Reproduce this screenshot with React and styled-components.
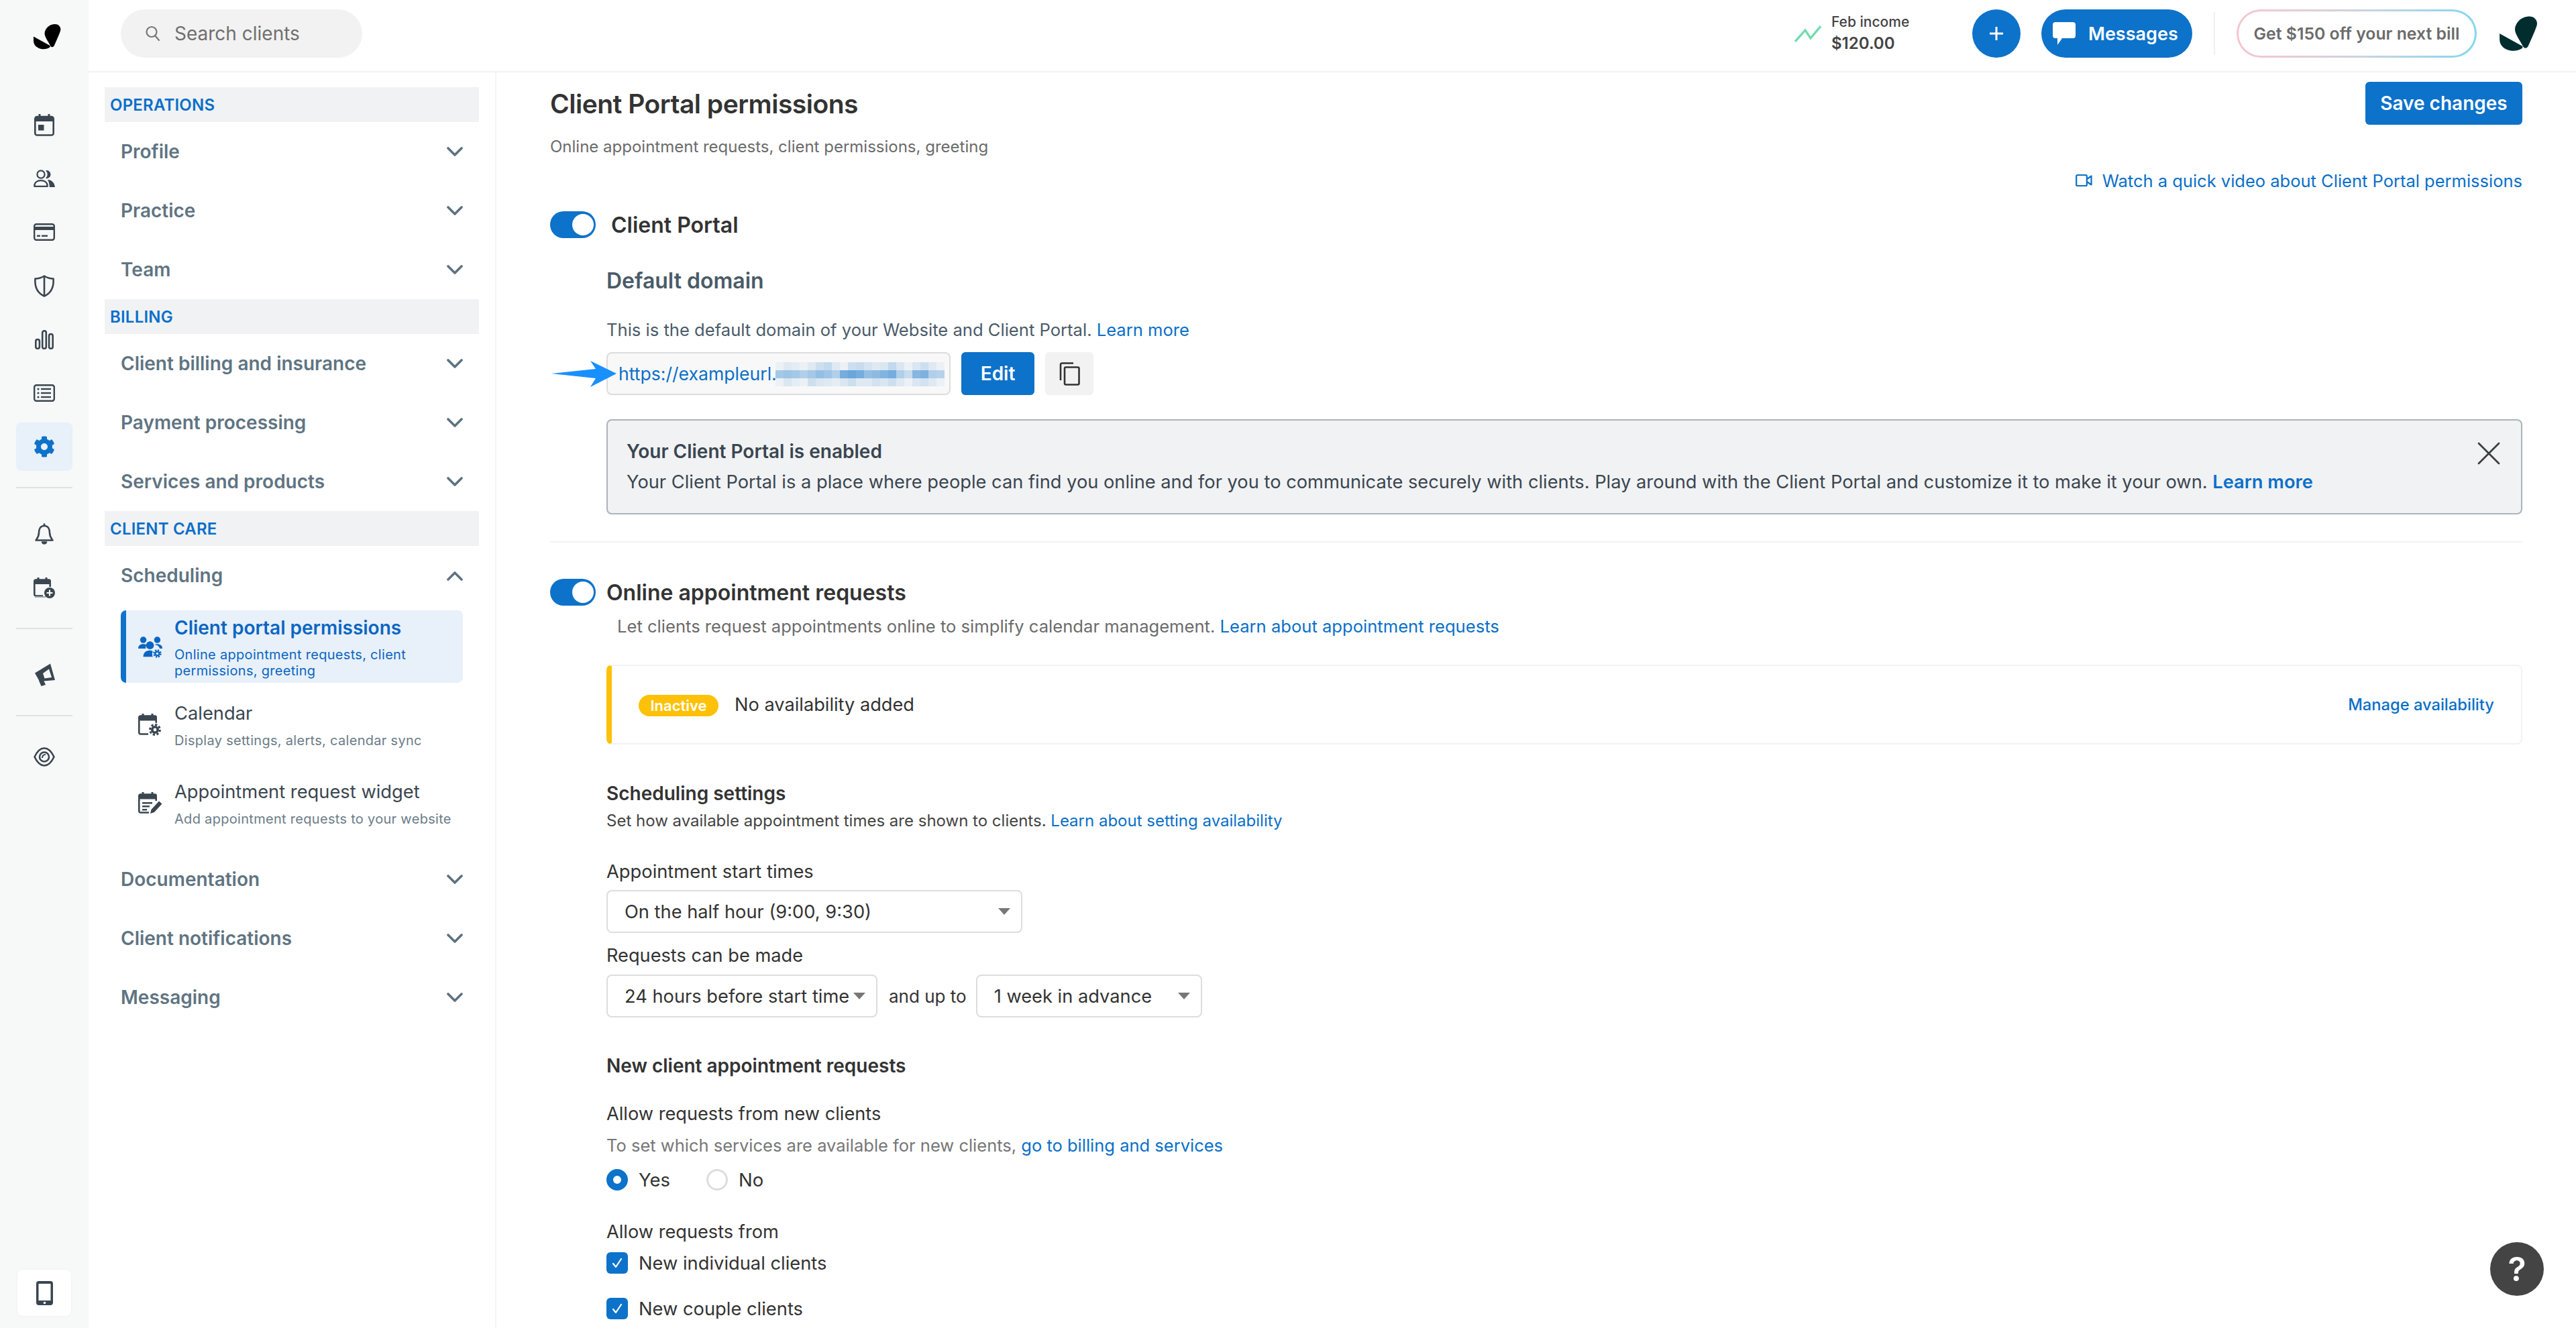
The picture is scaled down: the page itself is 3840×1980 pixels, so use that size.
import React from 'react';
import styled, { createGlobalStyle } from 'styled-components';
import { FaCog } from 'react-icons/fa';

const Global = createGlobalStyle`
  html, body { margin: 0; padding: 0; background: #fff; height: 1980px; overflow: hidden; }
  * { box-sizing: border-box; }
  body { font-family: Inter, "Noto Sans", sans-serif; color: #333; }
  a { color: #0a6fc9; text-decoration: none; }
`;

const BLUE = '#0d72ca';
const DARK = '#3a4650';
const LINK = '#0a6fc9';

const Page = styled.div`
  display: flex; width: 3840px; height: 1980px; overflow: hidden; position: relative;
`;
const Rail = styled.nav`
  width: 132px; flex: none; background: #f7f8f8; display: flex; flex-direction: column; align-items: center;
  height: 1980px; padding-top: 35px; padding-bottom: 18px;
`;
const RailLogo = styled.div`
  height: 40px; margin-bottom: 71px; margin-left: 8px; display: flex;
`;
const RailItem = styled.div`
  width: 84px; height: 72px; margin: 4px 0; border-radius: 8px; display: flex; align-items: center; justify-content: center;
  background: ${p => (p.$active ? '#e8f0fa' : 'transparent')}; color: ${p => (p.$active ? BLUE : DARK)};
`;
const RailDivider = styled.div`
  width: 84px; height: 2px; background: #dfe1e2; margin: 20px 0 ${p => p.$tight ? '20px' : '28px'};
`;
const MobileBtn = styled.div`
  margin-top: auto; width: 80px; height: 69px; background: #fff; border-radius: 8px; box-shadow: 0 0 3px rgba(0,0,0,.06);
  display: flex; align-items: center; justify-content: center;
`;
const Right = styled.div`
  flex: 1; display: flex; flex-direction: column; min-width: 0;
`;
const Header = styled.header`
  height: 108px; flex: none; border-bottom: 2px solid #f2f2f2; display: flex; align-items: flex-start; padding-top: 14px; padding-left: 48px;
`;
const Search = styled.div`
  width: 360px; height: 72px; border-radius: 36px; background: #f2f2f2; display: flex; align-items: center; padding-left: 37px; gap: 21px;
  font-size: 28px; color: #6f6f6f;
`;
const Spacer = styled.div` flex: 1; `;
const Income = styled.div`
  width: 265px; display: flex; align-items: center; gap: 15px; height: 72px;
`;
const IncomeText = styled.div`
  display: flex; flex-direction: column; color: #444;
`;
const IncomeLabel = styled.span` font-size: 21px; line-height: 30px; font-weight: 500; `;
const IncomeValue = styled.span` font-size: 24px; line-height: 34px; font-weight: 600; `;
const PlusBtn = styled.div`
  width: 72px; height: 72px; border-radius: 50%; background: ${BLUE}; display: flex; align-items: center; justify-content: center; margin-right: 31px;
`;
const MessagesBtn = styled.div`
  width: 225px; height: 72px; border-radius: 36px; background: ${BLUE}; color: #fff; display: flex; align-items: center; padding-left: 17px; gap: 19px;
  font-size: 27px; font-weight: 600;
`;
const HeaderDivider = styled.div`
  width: 2px; height: 64px; background: #f0f0f0; margin: 4px 32px 0 32px;
`;
const Promo = styled.div`
  width: 358px; height: 72px; border-radius: 36px; border: 3px solid transparent;
  background: linear-gradient(#fff, #fff) padding-box, linear-gradient(90deg, #f6c6cf, #cfd3dc 50%, #85d6f0) border-box;
  display: flex; align-items: center; justify-content: center; font-size: 24.8px; font-weight: 600; color: #6b6b6b;
`;
const HeaderLogo = styled.div`
  margin-left: 34px; margin-right: 57px; margin-top: 9px; display: flex;
`;
const Body = styled.div`
  flex: 1; display: flex; min-height: 0;
`;
const Sidebar = styled.aside`
  width: 608px; flex: none; border-right: 2px solid #f5f5f5; padding: 22px 24px 0;
`;
const SectionBar = styled.div`
  height: 52px; background: #f1f2f4; padding-left: 8px; display: flex; align-items: center;
  color: ${LINK}; font-size: 24px; font-weight: 600; letter-spacing: 0.2px;
`;
const NavRow = styled.div`
  height: 88px; display: flex; align-items: center; justify-content: space-between; padding: 0 24px;
  font-size: 28px; font-weight: 600; color: #5f7482;
`;
const SubList = styled.div`
  padding: 0 24px; margin-top: 8px; margin-bottom: 28px;
`;
const SubItem = styled.div`
  width: 510px; display: flex; align-items: center; gap: 18px; padding: 8px 10px 6px 26px; margin-top: ${p => p.$top || 0}px;
  border-radius: 8px; position: relative; overflow: hidden;
  background: ${p => (p.$active ? '#e8f0fa' : 'transparent')};
  border-left: ${p => (p.$active ? `8px solid ${BLUE}` : 'none')};
  padding-left: ${p => (p.$active ? 18 : 26)}px;
`;
const SubIcon = styled.div` width: 36px; height: 40px; flex: none; display: flex; align-items: center; `;
const SubText = styled.div` flex: 1; min-width: 0; `;
const SubTitle = styled.div`
  font-size: ${p => (p.$active ? 28 : 27.3)}px; line-height: 36px; font-weight: ${p => (p.$active ? 600 : 400)}; color: ${p => (p.$active ? '#0a66c2' : '#3a4650')};
`;
const SubDesc = styled.div`
  font-size: 20px; line-height: 24px; margin-top: 10px; letter-spacing: 0.3px; color: ${p => (p.$active ? '#0a66c2' : '#6b7c88')};
`;
const Main = styled.main`
  flex: 1; padding: 14px 80px 0; min-width: 0;
`;
const HeadRow = styled.div` display: flex; justify-content: space-between; align-items: center; height: 64px; `;
const Title = styled.h1` margin: 0; font-size: 39px; font-weight: 600; color: #333; letter-spacing: -0.5px; `;
const SaveBtn = styled.div`
  width: 234px; height: 64px; background: ${BLUE}; color: #fff; border-radius: 6px; display: flex; align-items: center; justify-content: center;
  font-size: 28px; font-weight: 600;
`;
const Line = styled.div`
  margin-top: ${p => p.$mt || 0}px; padding-left: ${p => p.$pl || 0}px; font-size: ${p => p.$size || 25.6}px; line-height: ${p => p.$lh || 36}px;
  font-weight: ${p => p.$w || 400}; color: ${p => p.$color || '#333'};
`;
const WatchLink = styled.a`
  margin-top: 14px; height: 36px; display: flex; justify-content: flex-end; align-items: center; gap: 15px; font-size: 25.5px; color: ${LINK};
`;
const ToggleRow = styled.div`
  margin-top: ${p => p.$mt}px; display: flex; align-items: center; height: 40px; gap: ${p => p.$gap}px;
  font-size: 32px; font-weight: 600; color: #333;
`;
const Toggle = styled.div`
  width: 68px; height: 40px; border-radius: 20px; background: ${BLUE}; position: relative; flex: none;
  &::after { content: ''; position: absolute; right: 3px; top: 4px; width: 32px; height: 32px; border-radius: 50%; background: #fff; }
`;
const DomainRow = styled.div`
  margin-top: 15px; margin-left: 84px; display: flex; gap: 16px; height: 64px; position: relative;
`;
const ArrowMark = styled.svg`
  position: absolute; left: -84px; top: 10px; z-index: 2;
`;
const DomainInput = styled.div`
  width: 513px; height: 64px; background: #f8f8f8; border: 2px solid #ddd; border-radius: 8px; display: flex; align-items: center; padding-left: 16px;
  font-size: 26.6px; color: ${LINK}; position: relative; overflow: hidden;
`;
const Blur = styled.svg` position: absolute; left: 250px; top: 13px; `;
const EditBtn = styled.div`
  width: 109px; height: 64px; background: ${BLUE}; border-radius: 6px; color: #fff; display: flex; align-items: center; justify-content: center;
  font-size: 28px; font-weight: 600;
`;
const CopyBtn = styled.div`
  width: 72px; height: 64px; background: #f2f2f2; border-radius: 6px; display: flex; align-items: center; justify-content: center;
`;
const Alert = styled.div`
  margin-top: 36px; margin-left: 84px; height: 142px; background: #f1f2f4; border: 2px solid #a9b5bc; border-radius: 8px; padding: 28px 28px 0 28px;
  position: relative; color: #3a4650;
`;
const AlertTitle = styled.div` font-size: 28px; line-height: 36px; font-weight: 600; `;
const AlertText = styled.div`
  font-size: 27.25px; line-height: 36px; margin-top: 10px;
  a { font-weight: 600; }
`;
const Close = styled.svg` position: absolute; right: 31px; top: 32px; `;
const Divider = styled.div` height: 2px; background: #f2f2f2; margin-top: 40px; `;
const Card = styled.div`
  margin-top: 39px; margin-left: 84px; height: 119px; border: 2px solid #f2f2f2; border-left: 8px solid #ffc107; border-radius: 8px;
  display: flex; align-items: center; padding: 0 40px 0 40px; gap: 24px;
`;
const Badge = styled.span`
  width: 119px; height: 32px; background: #ffc107; color: #fff; border-radius: 16px; display: flex; align-items: center; justify-content: center;
  font-size: 22px; font-weight: 600; margin-top: 3px;
`;
const CardText = styled.span` font-size: 27.2px; color: #333; flex: 1; `;
const CardLink = styled.a` font-size: 23.7px; font-weight: 500; `;
const Indent = styled.div` margin-left: 84px; `;
const Select = styled.div`
  width: ${p => p.$width}px; height: 64px; border: 2px solid #ddd; border-radius: 8px; background: #fff; display: flex; align-items: center;
  justify-content: space-between; padding: 0 16px 0 25px; font-size: 27.25px; color: #333; flex: none; white-space: nowrap;
  margin-top: ${p => p.$mt || 0}px;
  &::after { content: ''; width: 0; height: 0; border-left: 9px solid transparent; border-right: 9px solid transparent; border-top: 10px solid #777; }
`;
const SelectRow = styled.div`
  margin-top: 10px; display: flex; align-items: center; height: 64px;
`;
const AndUp = styled.span` font-size: 26px; color: #333; margin: 0 14px 0 17px; `;
const RadioRow = styled.div`
  margin-top: 15px; display: flex; align-items: center; height: 36px; font-size: 27.5px;
`;
const Radio = styled.span`
  width: 32px; height: 32px; border-radius: 50%; flex: none; background: #fff; margin-right: 16px;
  border: ${p => (p.$on ? `10px solid ${BLUE}` : '3px solid #ddd')};
`;
const RadioLabel = styled.span` width: 101px; color: #333; `;
const CheckRow = styled.div`
  margin-top: ${p => p.$mt}px; display: flex; align-items: center; gap: 16px; height: 36px; font-size: 27.3px; color: #333;
`;
const CheckBox = styled.span`
  width: 32px; height: 32px; background: ${BLUE}; border-radius: 6px; display: flex; align-items: center; justify-content: center; flex: none;
`;
const Help = styled.div`
  position: absolute; left: 3712px; top: 1852px; width: 80px; height: 80px; border-radius: 50%; background: #444; color: #fff;
  display: flex; align-items: center; justify-content: center; font-size: 50px; font-weight: 600;
`;

const Logo = ({ fill, w = 41, h = 39 }) => (
  <svg width={w} height={h} viewBox="20 14 41 39" fill={fill}>
    <path d="M36.5 29C37 21 44 15 52 15C58 15 61.5 20 60 25C58 31 54 40 51 46.5C49.5 50 46.5 50 45 47C42 41 36.5 34 36.5 29Z" />
    <path d="M20 33.5L44.5 47C45 48 45 49 43.5 50C40 52 36 52.5 32 52C25 51 20 46 20 40Z" />
  </svg>
);
const Chevron = ({ up }) => (
  <svg width="24" height="15" viewBox="0 0 24 15" fill="none" stroke="#5d7280" strokeWidth="3.6" strokeLinecap="round" strokeLinejoin="round">
    <path d={up ? 'M2 13L12 3L22 13' : 'M2 2L12 12L22 2'} />
  </svg>
);
const CalendarIcon = () => (
  <svg width="30" height="33" viewBox="0 0 30 33" fill={DARK}>
    <path d="M8 0v5M22 0v5" stroke={DARK} strokeWidth="3" />
    <rect x="1.3" y="4" width="27.4" height="27.5" rx="3" fill="none" stroke={DARK} strokeWidth="2.6" />
    <rect x="1" y="4" width="28" height="7" rx="2" />
    <rect x="6" y="16" width="8.5" height="8.5" />
  </svg>
);
const PeopleIcon = () => (
  <svg width="32" height="26" viewBox="0 0 32 26" fill={DARK}>
    <circle cx="11" cy="7" r="5.6" fill="none" stroke={DARK} strokeWidth="2.2" />
    <path d="M18 1.2a6 6 0 1 1 0 11.6a7.5 7.5 0 0 0 0-11.6z" />
    <path d="M1.2 24.8c0-5.6 4-8.6 9.8-8.6s9.8 3 9.8 8.6z" fill="none" stroke={DARK} strokeWidth="2.2" strokeLinejoin="round" />
    <path d="M21 15c6 0 10 4 11 11h-8.2c0-4.5-1-8-2.8-11z" />
  </svg>
);
const CardIcon = () => (
  <svg width="32" height="26" viewBox="0 0 32 26" fill={DARK}>
    <rect x="1.2" y="1.2" width="29.6" height="23.6" rx="3" fill="none" stroke={DARK} strokeWidth="2.4" />
    <rect x="1" y="5" width="30" height="5" />
    <rect x="5" y="17.5" width="5" height="2.4" />
    <rect x="12" y="17.5" width="9" height="2.4" />
  </svg>
);
const ShieldIcon = () => (
  <svg width="30" height="33" viewBox="0 0 30 33" fill="none" stroke={DARK} strokeWidth="2.6" strokeLinejoin="round">
    <path d="M15 1.5C19 4 24 5.5 28.5 5.5C29.5 18 25 27 15 31.5C5 27 .5 18 1.5 5.5C6 5.5 11 4 15 1.5Z" />
    <path d="M15 1.5V31.5" />
  </svg>
);
const ChartIcon = () => (
  <svg width="28" height="29" viewBox="0 0 28 29" fill="none" stroke={DARK} strokeWidth="2.6">
    <rect x="1.3" y="14" width="5.6" height="13.7" rx="2.8" />
    <rect x="11.2" y="1.3" width="5.6" height="26.4" rx="2.8" />
    <rect x="21.1" y="6" width="5.6" height="21.7" rx="2.8" />
  </svg>
);
const ListIcon = () => (
  <svg width="32" height="26" viewBox="0 0 32 26" fill={DARK}>
    <rect x="1.2" y="1.2" width="29.6" height="23.6" rx="3" fill="none" stroke={DARK} strokeWidth="2.4" />
    {[7, 13, 19].map(y => (
      <g key={y}>
        <circle cx="7" cy={y} r="1.6" />
        <rect x="11" y={y - 1.2} width="15" height="2.4" />
      </g>
    ))}
  </svg>
);
const BellIcon = () => (
  <svg width="28" height="32" viewBox="0 0 28 32" fill="none" stroke={DARK} strokeWidth="2.6" strokeLinejoin="round">
    <path d="M14 4C8 4 6 9 6 14C6 20 4 22 1.5 25.5H26.5C24 22 22 20 22 14C22 9 20 4 14 4Z" />
    <path d="M14 0.5V4" />
    <path d="M11 28.5C12 31 16 31 17 28.5Z" fill={DARK} />
  </svg>
);
const CalPlusIcon = () => (
  <svg width="32" height="31" viewBox="0 0 32 31" fill={DARK}>
    <path d="M7 0v4M19 0v4" stroke={DARK} strokeWidth="3" />
    <path d="M14 27.5H3.5a2.2 2.2 0 0 1-2.2-2.2V5.5a2 2 0 0 1 2-2h19.4a2 2 0 0 1 2 2V14" fill="none" stroke={DARK} strokeWidth="2.6" />
    <rect x="1" y="3" width="24" height="7" rx="2" />
    <path d="M2 28h16v2H2z" fill="#a5abaf" />
    <circle cx="24" cy="23" r="8" />
    <path d="M24 18.5v9M19.5 23h9" stroke="#fff" strokeWidth="2.2" />
  </svg>
);
const MegaphoneIcon = () => (
  <svg width="31" height="34" viewBox="0 0 31 34" fill={DARK}>
    <path d="M1 14.5L24 0.5L31 25L8 27Z" />
    <path d="M13 15L22 8.5L26 21L15.5 22.5Z" fill="#f7f8f8" />
    <path d="M7 26l3.5 8l6.5-2l-3-6.5Z" />
  </svg>
);
const EyeIcon = () => (
  <svg width="32" height="29" viewBox="0 0 32 29" fill="none" stroke={DARK} strokeWidth="2.6">
    <path d="M1.5 14.5C6 5 11 1.5 16 1.5S26 5 30.5 14.5C26 24 21 27.5 16 27.5S6 24 1.5 14.5Z" />
    <circle cx="16" cy="14.5" r="7" />
    <path d="M13 16c0-3 2-5 5-5" strokeWidth="2" />
  </svg>
);
const PhoneIcon = () => (
  <svg width="25" height="36" viewBox="0 0 25 36">
    <rect width="25" height="36" rx="4" fill={DARK} />
    <rect x="3.5" y="4" width="18" height="25" fill="#fff" />
    <circle cx="12.5" cy="32.5" r="1.8" fill="#fff" />
  </svg>
);
const TeamIcon = () => (
  <svg width="38" height="36" viewBox="0 0 38 36" fill="#0a66c2">
    <circle cx="8" cy="6.5" r="5" />
    <circle cx="30" cy="6.5" r="5" />
    <path d="M0 20c0-5 4-7 8-7c2 0 4 .5 5 1.5c-1 1.5-1.5 3.5-1 5.5z" />
    <path d="M26 14c2-1.5 8-2 11 2c.7 1 1 2.5 1 4h-4a9 9 0 0 0-8-6z" />
    <circle cx="18.5" cy="15" r="6.2" />
    <path d="M8 33c0-6 4-10 10-10c2.5 0 4.5 .6 6 2c-2 2-2.5 5-1 8z" />
    <circle cx="30" cy="28" r="8" fill="#e8f0fa" />
    <circle cx="30" cy="28" r="3.2" fill="none" stroke="#0a66c2" strokeWidth="2.6" />
    <circle cx="30" cy="28" r="5.4" fill="none" stroke="#0a66c2" strokeWidth="2.4" strokeDasharray="2.4 1.84" />
  </svg>
);
const CalGearIcon = () => (
  <svg width="36" height="34" viewBox="0 0 36 34" fill={DARK}>
    <path d="M7 0v4M21 0v4" stroke={DARK} strokeWidth="3" />
    <path d="M15 30.5H3.5a2.2 2.2 0 0 1-2.2-2.2V5.5a2 2 0 0 1 2-2h21.4a2 2 0 0 1 2 2V14" fill="none" stroke={DARK} strokeWidth="2.6" />
    <rect x="1" y="3" width="26" height="7.5" rx="2" />
    <circle cx="25" cy="24" r="10.5" fill="#fff" />
    <circle cx="25" cy="24" r="4.2" fill="none" stroke={DARK} strokeWidth="3.6" />
    <circle cx="25" cy="24" r="7.4" fill="none" stroke={DARK} strokeWidth="3" strokeDasharray="3.2 2.6" />
  </svg>
);
const CalEditIcon = () => (
  <svg width="36" height="34" viewBox="0 0 36 34" fill={DARK}>
    <path d="M7 0v4M21 0v4" stroke={DARK} strokeWidth="3" />
    <path d="M16 30.5H3.5a2.2 2.2 0 0 1-2.2-2.2V5.5a2 2 0 0 1 2-2h21.4a2 2 0 0 1 2 2V13" fill="none" stroke={DARK} strokeWidth="2.6" />
    <rect x="1" y="3" width="26" height="7.5" rx="2" />
    <path d="M6 15h15v2.6H6zM6 20h11v2.6H6zM6 25h7v2.6H6z" />
    <path d="M31 13.5l4.5 4L24 30l-6 2l1.5-6Z" />
  </svg>
);
const CopyIcon = () => (
  <svg width="31" height="35" viewBox="0 0 31 35" fill="none" stroke="#333" strokeWidth="2.6" strokeLinejoin="round">
    <path d="M2 27V3.5A2 2 0 0 1 4 1.5H21" />
    <rect x="8" y="7.5" width="21.5" height="26" rx="2" />
  </svg>
);
const VideoIcon = () => (
  <svg width="25" height="20" viewBox="0 0 25 20" fill="none" stroke={LINK} strokeWidth="2.2" strokeLinejoin="round">
    <rect x="1.2" y="2" width="15.6" height="16" rx="1.5" />
    <path d="M17 8L23.5 3.5V16.5L17 12" />
  </svg>
);
const Check = () => (
  <svg width="18" height="18" viewBox="0 0 18 18" fill="none" stroke="#fff" strokeWidth="2.2" strokeLinecap="round" strokeLinejoin="round">
    <path d="M3 10l4 5l8-12" />
  </svg>
);

const cells = [
  [.05,.1,.08,.05,.1,.18,.22,.1,.05,.18,.2,.15,.1,.12,.22,.12,.05,.12,.18,.1,.05],
  [.35,.38,.35,.3,.35,.42,.38,.3,.55,.6,.55,.42,.45,.5,.55,.3,.2,.48,.52,.3,.28],
  [.05,.12,.08,.05,.18,.12,.1,.08,.12,.18,.1,.1,.16,.12,.18,.1,.05,.12,.16,.1,.05],
];

const NAV_A = ['Profile', 'Practice', 'Team'];
const NAV_B = ['Client billing and insurance', 'Payment processing', 'Services and products'];
const NAV_C = ['Documentation', 'Client notifications', 'Messaging'];

export default function App() {
  return (
    <Page>
      <Global />
      <Rail>
        <RailLogo><Logo fill="#000" /></RailLogo>
        <RailItem><CalendarIcon /></RailItem>
        <RailItem><PeopleIcon /></RailItem>
        <RailItem><CardIcon /></RailItem>
        <RailItem><ShieldIcon /></RailItem>
        <RailItem><ChartIcon /></RailItem>
        <RailItem><ListIcon /></RailItem>
        <RailItem $active><FaCog size={32} /></RailItem>
        <RailDivider />
        <RailItem><BellIcon /></RailItem>
        <RailItem><CalPlusIcon /></RailItem>
        <RailDivider />
        <RailItem><MegaphoneIcon /></RailItem>
        <RailDivider $tight />
        <RailItem><EyeIcon /></RailItem>
        <MobileBtn><PhoneIcon /></MobileBtn>
      </Rail>
      <Right>
        <Header>
          <Search>
            <svg width="22" height="24" viewBox="0 0 22 24" fill="none" stroke="#777" strokeWidth="2.2" strokeLinecap="round">
              <circle cx="9" cy="9.5" r="7.5" />
              <path d="M14.5 15.5L20 22" />
            </svg>
            Search clients
          </Search>
          <Spacer />
          <Income>
            <svg width="40" height="26" viewBox="0 0 40 26" fill="none" stroke="#74dbb0" strokeWidth="3.4">
              <path d="M1 25L16 8L24 20L39 2" />
            </svg>
            <IncomeText>
              <IncomeLabel>Feb income</IncomeLabel>
              <IncomeValue>$120.00</IncomeValue>
            </IncomeText>
          </Income>
          <PlusBtn>
            <svg width="24" height="24" viewBox="0 0 24 24" stroke="#fff" strokeWidth="3"><path d="M12 2V22M2 12H22" /></svg>
          </PlusBtn>
          <MessagesBtn>
            <svg width="34" height="34" viewBox="0 0 34 34" fill="#fff">
              <path d="M4 0H30A4 4 0 0 1 34 4V20A4 4 0 0 1 30 24H14L7 34V24H4A4 4 0 0 1 0 20V4A4 4 0 0 1 4 0Z" />
            </svg>
            Messages
          </MessagesBtn>
          <HeaderDivider />
          <Promo>Get $150 off your next bill</Promo>
          <HeaderLogo><Logo fill="#022d2e" w={57} h={54} /></HeaderLogo>
        </Header>
        <Body>
          <Sidebar>
            <SectionBar>OPERATIONS</SectionBar>
            {NAV_A.map(n => <NavRow key={n}>{n}<Chevron /></NavRow>)}
            <SectionBar>BILLING</SectionBar>
            {NAV_B.map(n => <NavRow key={n}>{n}<Chevron /></NavRow>)}
            <SectionBar>CLIENT CARE</SectionBar>
            <NavRow>Scheduling<Chevron up /></NavRow>
            <SubList>
              <SubItem $active>
                <SubIcon><TeamIcon /></SubIcon>
                <SubText>
                  <SubTitle $active>Client portal permissions</SubTitle>
                  <SubDesc $active>Online appointment requests, client permissions, greeting</SubDesc>
                </SubText>
              </SubItem>
              <SubItem $top={20}>
                <SubIcon><CalGearIcon /></SubIcon>
                <SubText>
                  <SubTitle>Calendar</SubTitle>
                  <SubDesc>Display settings, alerts, calendar sync</SubDesc>
                </SubText>
              </SubItem>
              <SubItem $top={33}>
                <SubIcon><CalEditIcon /></SubIcon>
                <SubText>
                  <SubTitle>Appointment request widget</SubTitle>
                  <SubDesc>Add appointment requests to your website</SubDesc>
                </SubText>
              </SubItem>
            </SubList>
            {NAV_C.map(n => <NavRow key={n}>{n}<Chevron /></NavRow>)}
          </Sidebar>
          <Main>
            <HeadRow>
              <Title>Client Portal permissions</Title>
              <SaveBtn>Save changes</SaveBtn>
            </HeadRow>
            <Line $mt={15} $size={24} $color="#6b6b6b">Online appointment requests, client permissions, greeting</Line>
            <WatchLink><VideoIcon />Watch a quick video about Client Portal permissions</WatchLink>
            <ToggleRow $mt={28} $gap={23}><Toggle />Client Portal</ToggleRow>
            <Line $mt={40} $pl={84} $size={32} $lh={48} $w={600} $color="#4a5b68">Default domain</Line>
            <Line $mt={31} $pl={84} $color="#4a5b68">This is the default domain of your Website and Client Portal. <a>Learn more</a></Line>
            <DomainRow>
              <ArrowMark width="100" height="42" viewBox="0 0 100 42" fill="#1890ff">
                <path d="M2 22L68 15L60 3L99 22L60 42L68 29Z" />
              </ArrowMark>
              <DomainInput>
                https://exampleurl.
                <Blur width="252" height="36" viewBox="0 0 252 36">
                  <rect width="252" height="36" fill="#f8f8f8" />
                  {cells.map((row, r) => row.map((a, c) => (
                    <rect key={`${r}-${c}`} x={c * 12} y={r * 12} width="12" height="12" fill="#0a6fc9" opacity={a} />
                  )))}
                </Blur>
              </DomainInput>
              <EditBtn>Edit</EditBtn>
              <CopyBtn><CopyIcon /></CopyBtn>
            </DomainRow>
            <Alert>
              <AlertTitle>Your Client Portal is enabled</AlertTitle>
              <AlertText>Your Client Portal is a place where people can find you online and for you to communicate securely with clients. Play around with the Client Portal and customize it to make it your own. <a>Learn more</a></AlertText>
              <Close width="34" height="34" viewBox="0 0 34 34" stroke="#3a3f42" strokeWidth="2.8" strokeLinecap="round"><path d="M2 2L32 32M32 2L2 32" /></Close>
            </Alert>
            <Divider />
            <ToggleRow $mt={54} $gap={16}><Toggle />Online appointment requests</ToggleRow>
            <Line $mt={13} $pl={100} $color="#6b6b6b">Let clients request appointments online to simplify calendar management. <a>Learn about appointment requests</a></Line>
            <Card>
              <Badge>Inactive</Badge>
              <CardText>No availability added</CardText>
              <CardLink>Manage availability</CardLink>
            </Card>
            <Indent>
              <Line $mt={53} $size={28} $lh={40} $w={600}>Scheduling settings</Line>
              <Line $mt={4} $size={24} $lh={34} $color="#444">Set how available appointment times are shown to clients. <a>Learn about setting availability</a></Line>
              <Line $mt={41} $size={27.3}>Appointment start times</Line>
              <Select $width={620} $mt={9}>On the half hour (9:00, 9:30)</Select>
              <Line $mt={16} $size={27.2}>Requests can be made</Line>
              <SelectRow>
                <Select $width={404}>24 hours before start time</Select>
                <AndUp>and up to</AndUp>
                <Select $width={337}>1 week in advance</Select>
              </SelectRow>
              <Line $mt={54} $size={28} $w={600}>New client appointment requests</Line>
              <Line $mt={36} $size={27.2}>Allow requests from new clients</Line>
              <Line $mt={11} $size={25.5} $color="#777">To set which services are available for new clients, <a>go to billing and services</a></Line>
              <RadioRow>
                <Radio $on /><RadioLabel>Yes</RadioLabel>
                <Radio /><RadioLabel>No</RadioLabel>
              </RadioRow>
              <Line $mt={42} $size={27.2}>Allow requests from</Line>
              <CheckRow $mt={10}><CheckBox><Check /></CheckBox>New individual clients</CheckRow>
              <CheckRow $mt={32}><CheckBox><Check /></CheckBox>New couple clients</CheckRow>
            </Indent>
          </Main>
        </Body>
      </Right>
      <Help>?</Help>
    </Page>
  );
}
